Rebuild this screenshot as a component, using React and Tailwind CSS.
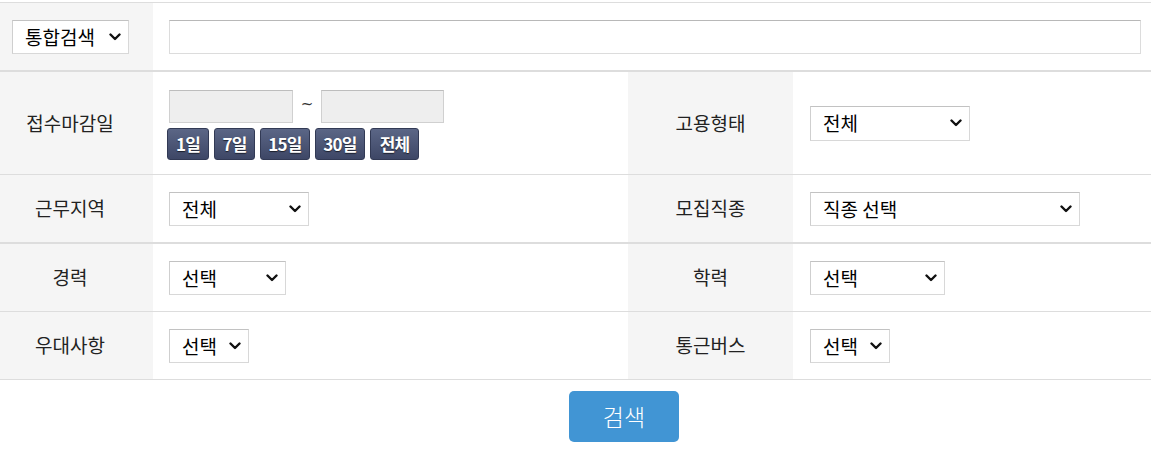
import React from "react";

const FONT = { fontFamily: '"Noto Sans CJK KR", "Noto Sans", sans-serif' };

function Chevron() {
  return (
    <svg width="12" height="8" viewBox="0 0 12 8" className="shrink-0">
      <polyline points="1.5,1.5 6,6 10.5,1.5" fill="none" stroke="#111" strokeWidth="2.4" strokeLinecap="round" strokeLinejoin="round" />
    </svg>
  );
}

function Select({ label, className }) {
  return (
    <div className={"flex items-center justify-between bg-white border border-[#d8d8d8] border-t-[#c2c2c2] border-l-[#cfcfcf] pl-[12px] pr-[7px] h-[34px] text-[19px] text-black " + className}>
      <span className="leading-none -mt-[1px]">{label}</span>
      <Chevron />
    </div>
  );
}

function Label({ children, left }) {
  return (
    <div className={"bg-[#f5f5f5] flex items-center justify-center text-[19px] text-[#222] " + (left ? "pr-[13px]" : "")}>
      {children}
    </div>
  );
}

export default function App() {
  return (
    <div className="w-[1151px] h-[449px] bg-white overflow-hidden" style={FONT}>
      <div className="mt-[2px] border-t border-[#dddddd]">
        {/* Row 1 */}
        <div className="grid grid-cols-[153px_1fr] h-[69px] border-b-2 border-[#dddddd]">
          <div className="bg-[#f5f5f5] flex items-center pl-[12px]">
            <Select label="통합검색" className="w-[117px]" />
          </div>
          <div className="flex items-center pl-[16px] pr-[10px]">
            <div className="w-full h-[34px] border border-[#dcdcdc] border-t-[#b8b8b8]" />
          </div>
        </div>

        {/* Row 2 */}
        <div className="grid grid-cols-[153px_475px_165px_1fr] h-[103px] border-b border-[#dddddd]">
          <Label left>접수마감일</Label>
          <div className="flex flex-col justify-center pl-[16px] pt-[3px]">
            <div className="flex items-center">
              <div className="w-[124px] h-[33px] bg-[#eeeeee] border border-[#d0d0d0] border-t-[#bdbdbd]" />
              <span className="w-[28px] text-center text-[15px] text-[#333] leading-none -mt-[3px]" style={{ fontFamily: '"DejaVu Sans", sans-serif' }}>~</span>
              <div className="w-[123px] h-[33px] bg-[#eeeeee] border border-[#d0d0d0] border-t-[#bdbdbd]" />
            </div>
            <div className="flex gap-[5px] mt-[5px] -ml-[2px]">
              {[
                ["1일", "w-[42px]"],
                ["7일", "w-[41px]"],
                ["15일", "w-[50px]"],
                ["30일", "w-[50px]"],
                ["전체", "w-[49px]"],
              ].map(([t, w]) => (
                <div
                  key={t}
                  className={"h-[32px] rounded-[3px] border border-[#323a55] bg-gradient-to-b from-[#5b6686] to-[#3e4766] flex items-center justify-center text-white font-bold text-[17px] tracking-[-0.8px] [text-shadow:0_1px_1px_rgba(0,0,0,0.6)] " + w}
                >
                  {t}
                </div>
              ))}
            </div>
          </div>
          <Label>고용형태</Label>
          <div className="flex items-center pl-[17px]">
            <Select label="전체" className="w-[160px] h-[35px]" />
          </div>
        </div>

        {/* Row 3 */}
        <div className="grid grid-cols-[153px_475px_165px_1fr] h-[69px] border-b-2 border-[#dddddd]">
          <Label left>근무지역</Label>
          <div className="flex items-center pl-[16px]">
            <Select label="전체" className="w-[140px]" />
          </div>
          <Label>모집직종</Label>
          <div className="flex items-center pl-[17px]">
            <Select label="직종 선택" className="w-[270px]" />
          </div>
        </div>

        {/* Row 4 */}
        <div className="grid grid-cols-[153px_475px_165px_1fr] h-[68px] border-b border-[#dddddd]">
          <Label left>경력</Label>
          <div className="flex items-center pl-[16px]">
            <Select label="선택" className="w-[117px]" />
          </div>
          <Label>학력</Label>
          <div className="flex items-center pl-[17px]">
            <Select label="선택" className="w-[135px]" />
          </div>
        </div>

        {/* Row 5 */}
        <div className="grid grid-cols-[153px_475px_165px_1fr] h-[68px] border-b border-[#dddddd]">
          <Label left>우대사항</Label>
          <div className="flex items-center pl-[16px]">
            <Select label="선택" className="w-[80px]" />
          </div>
          <Label>통근버스</Label>
          <div className="flex items-center pl-[17px]">
            <Select label="선택" className="w-[80px]" />
          </div>
        </div>

        <div className="pt-[11px]">
          <div className="ml-[569px] w-[110px] h-[51px] rounded-[5px] bg-[#4195d4] flex items-center justify-center text-white text-[23px] font-light">
            검색
          </div>
        </div>
      </div>
    </div>
  );
}
